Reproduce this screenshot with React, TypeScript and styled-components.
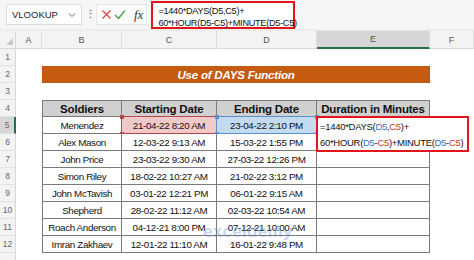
import { FC } from 'react';
import styled, { createGlobalStyle, css } from 'styled-components';

const GlobalStyle = createGlobalStyle`
  html, body {
    margin: 0;
    padding: 0;
    background: #ffffff;
  }
  body {
    width: 474px;
    height: 260px;
    overflow: hidden;
    font-family: 'Liberation Sans', Arial, sans-serif;
  }
`;

const BLUE = '#3b6fc4';
const RED = '#c0392b';
const GRID = '#7a7a7a';

const Page = styled.div`
  position: relative;
  width: 474px;
  height: 260px;
  overflow: hidden;
  background: #ffffff;
`;

const FormulaBar = styled.div`
  display: flex;
  align-items: center;
  gap: 3px;
  height: 31px;
  padding: 0 0 0 6px;
  background: #f6f6f6;
  border-bottom: 2px solid #ececec;
  box-sizing: border-box;
`;

const NameBox = styled.div`
  display: flex;
  align-items: center;
  justify-content: space-between;
  width: 76px;
  height: 21px;
  padding: 0 5px;
  box-sizing: border-box;
  background: #ffffff;
  border: 1px solid #dcdcdc;
  font-size: 9.5px;
  color: #222;
`;

const Dots = styled.span`
  width: 8px;
  text-align: center;
  color: #888;
  font-size: 11px;
  font-weight: bold;
`;

const FxGroup = styled.div`
  display: flex;
  align-items: center;
  gap: 2px;
  height: 21px;
  padding: 0 3px 0 4px;
  border: 1px solid #e6e6e6;
  background: #fbfbfb;
  box-sizing: border-box;
`;

const Fx = styled.span`
  font-family: 'Liberation Serif', 'Times New Roman', serif;
  font-style: italic;
  font-size: 13px;
  color: #333;
  padding-left: 6px;
`;

const FormulaBox = styled.div`
  width: 144px;
  height: 28px;
  margin-left: 1px;
  padding: 2px 0 0 5px;
  box-sizing: border-box;
  background: #ffffff;
  border: 2px solid #e4141b;
  font-size: 9.2px;
  letter-spacing: -0.3px;
  line-height: 12.5px;
  color: #111;
  white-space: nowrap;
`;

const Sheet = styled.div`
  display: grid;
  grid-template-columns: 16px 26px 80px 95px 100px 113px 1fr;
  grid-template-rows: 18px repeat(13, 17px);
`;

const Corner = styled.div`
  background: #f3f3f3;
  border-bottom: 1px solid #d8d8d8;
  border-right: 1px solid #d8d8d8;
  box-sizing: border-box;
  display: flex;
  align-items: flex-end;
  justify-content: flex-end;
  padding: 0 2px 3px 0;

  &::after {
    content: '';
    width: 0;
    height: 0;
    border-left: 7px solid transparent;
    border-bottom: 7px solid #c8c8c8;
  }
`;

const ColHead = styled.div<{ $active?: boolean }>`
  display: flex;
  align-items: center;
  justify-content: center;
  box-sizing: border-box;
  font-size: 9px;
  color: #555;
  background: ${({ $active }) => ($active ? '#d6d6d6' : '#f3f3f3')};
  border-right: 1px solid #dedede;
  border-bottom: ${({ $active }) => ($active ? '2px solid #217346' : '1px solid #d8d8d8')};
`;

const RowHead = styled.div<{ $active?: boolean }>`
  display: flex;
  align-items: center;
  justify-content: center;
  box-sizing: border-box;
  font-size: 8.5px;
  color: #666;
  background: ${({ $active }) => ($active ? '#d6d6d6' : '#f3f3f3')};
  border-bottom: 1px solid #e2e2e2;
  border-right: ${({ $active }) => ($active ? '2px solid #217346' : '1px solid #d8d8d8')};
`;

const Blank = styled.div<{ $span?: boolean }>`
  ${({ $span }) => $span && css`grid-column: 2 / 8;`}
`;

const TitleBar = styled.div`
  grid-column: 3 / 7;
  display: flex;
  align-items: center;
  justify-content: center;
  background: #c55a11;
  color: #ffffff;
  font-size: 11.5px;
  letter-spacing: -0.2px;
  font-weight: bold;
  font-style: italic;
`;

const Cell = styled.div<{ $head?: boolean; $first?: boolean; $fill?: string }>`
  position: relative;
  display: flex;
  align-items: center;
  justify-content: center;
  box-sizing: border-box;
  font-size: 9.8px;
  letter-spacing: -0.35px;
  color: #111;
  white-space: nowrap;
  border-right: 1px solid ${GRID};
  border-bottom: 1px solid ${GRID};
  background: ${({ $fill }) => $fill || '#ffffff'};
  ${({ $first }) => $first && css`border-left: 1.5px solid ${GRID};`}
  ${({ $head }) =>
    $head &&
    css`
      border-top: 1.5px solid ${GRID};
      background: #d0d0d0;
      font-size: 11.5px;
      letter-spacing: -0.2px;
      font-weight: bold;
    `}
`;

const RefFrame = styled.div<{ $color: string }>`
  position: absolute;
  inset: -1px;
  border: 1px solid ${({ $color }) => $color};
  pointer-events: none;
`;

const Handle = styled.span<{ $color: string; $x: 'left' | 'right'; $y: 'top' | 'bottom' }>`
  position: absolute;
  width: 4px;
  height: 4px;
  background: ${({ $color }) => $color};
  ${({ $x }) => $x}: -2.5px;
  ${({ $y }) => $y}: -2.5px;
`;

const EditBox = styled.div`
  position: absolute;
  top: -1px;
  left: -1px;
  z-index: 2;
  width: 153px;
  height: 36px;
  padding: 1px 0 0 2px;
  box-sizing: border-box;
  background: #ffffff;
  border: 2px solid #e4141b;
  font-size: 9.5px;
  letter-spacing: -0.3px;
  line-height: 16px;
  color: #111;
  text-align: left;
  white-space: nowrap;
`;

const Ref = styled.span<{ $color: string }>`
  color: ${({ $color }) => $color};
`;

const Watermark = styled.div`
  position: absolute;
  left: 203px;
  top: 223px;
  display: flex;
  flex-direction: column;
  align-items: flex-start;
  opacity: 0.3;
  color: #4a78c8;
  pointer-events: none;
`;

const WatermarkName = styled.span`
  font-size: 17px;
  font-weight: bold;
  line-height: 17px;
  letter-spacing: 0.3px;
`;

const WatermarkTag = styled.span`
  font-size: 5px;
  letter-spacing: 1px;
  padding-left: 26px;
`;

type Row = [string, string, string];

const rows: Row[] = [
  ['Menendez', '21-04-22 8:20 AM', '23-04-22 2:10 PM'],
  ['Alex Mason', '12-03-22 9:13 AM', '15-03-22 1:55 PM'],
  ['John Price', '23-03-22 9:30 AM', '27-03-22 12:26 PM'],
  ['Simon Riley', '18-02-22 10:27 AM', '21-02-22 3:12 PM'],
  ['John McTavish', '03-01-22 12:21 PM', '06-01-22 9:15 AM'],
  ['Shepherd', '28-02-22 11:12 AM', '02-03-22 10:54 AM'],
  ['Roach Anderson', '04-12-21 8:00 PM', '07-12-21 10:00 AM'],
  ['Imran Zakhaev', '12-01-22 11:10 AM', '16-01-22 9:48 PM'],
];

const columns = ['A', 'B', 'C', 'D', 'E', 'F'];

const Frame: FC<{ color: string }> = ({ color }) => (
  <RefFrame $color={color}>
    <Handle $color={color} $x="left" $y="top" />
    <Handle $color={color} $x="right" $y="top" />
    <Handle $color={color} $x="left" $y="bottom" />
    <Handle $color={color} $x="right" $y="bottom" />
  </RefFrame>
);

const Chevron = () => (
  <svg width="8" height="6" viewBox="0 0 8 6">
    <path d="M1 1.5 L4 4.5 L7 1.5" fill="none" stroke="#666" strokeWidth="1" />
  </svg>
);

const Cross = () => (
  <svg width="11" height="11" viewBox="0 0 11 11">
    <path d="M1.5 1.5 L9.5 9.5 M9.5 1.5 L1.5 9.5" stroke="#e0474c" strokeWidth="1.3" />
  </svg>
);

const Check = () => (
  <svg width="12" height="11" viewBox="0 0 12 11">
    <path d="M1 6 L4.5 9.5 L11 1.5" fill="none" stroke="#3f9a4a" strokeWidth="1.2" />
  </svg>
);

const App: FC = () => {
  return (
    <Page>
      <GlobalStyle />
      <FormulaBar>
        <NameBox>
          VLOOKUP
          <Chevron />
        </NameBox>
        <Dots>⋮</Dots>
        <FxGroup>
          <Cross />
          <Check />
          <Fx>fx</Fx>
        </FxGroup>
        <FormulaBox>
          =1440*DAYS(D5,C5)+
          <br />
          60*HOUR(D5-C5)+MINUTE(D5-C5)
        </FormulaBox>
      </FormulaBar>

      <Sheet>
        <Corner />
        {columns.map((c) => (
          <ColHead key={c} $active={c === 'E'}>
            {c}
          </ColHead>
        ))}

        <RowHead>1</RowHead>
        <Blank $span />

        <RowHead>2</RowHead>
        <Blank />
        <TitleBar>Use of DAYS Function</TitleBar>
        <Blank />

        <RowHead>3</RowHead>
        <Blank $span />

        <RowHead>4</RowHead>
        <Blank />
        <Cell $head $first>Soldiers</Cell>
        <Cell $head>Starting Date</Cell>
        <Cell $head>Ending Date</Cell>
        <Cell $head>Duration in Minutes</Cell>
        <Blank />

        {rows.map(([name, start, end], i) => {
          const isEditing = i === 0;
          return [
            <RowHead key={`h${i}`} $active={isEditing}>
              {i + 5}
            </RowHead>,
            <Blank key={`a${i}`} />,
            <Cell key={`b${i}`} $first>
              {name}
            </Cell>,
            <Cell key={`c${i}`} $fill={isEditing ? '#f2c9c9' : undefined}>
              {start}
              {isEditing && <Frame color="#b8464b" />}
            </Cell>,
            <Cell key={`d${i}`} $fill={isEditing ? '#c3dbf0' : undefined}>
              {end}
              {isEditing && <Frame color="#5b8fcf" />}
            </Cell>,
            <Cell key={`e${i}`}>
              {isEditing && (
                <EditBox>
                  =1440*DAYS(<Ref $color={BLUE}>D5</Ref>,<Ref $color={RED}>C5</Ref>)+
                  <br />
                  60*HOUR(<Ref $color={BLUE}>D5</Ref>-<Ref $color={RED}>C5</Ref>)+MINUTE(
                  <Ref $color={BLUE}>D5</Ref>-<Ref $color={RED}>C5</Ref>)
                </EditBox>
              )}
            </Cell>,
            <Blank key={`f${i}`} />,
          ];
        })}

        <RowHead />
        <Blank $span />
      </Sheet>

      <Watermark>
        <WatermarkName>exceldemy</WatermarkName>
        <WatermarkTag>EXCEL · DATA · BI</WatermarkTag>
      </Watermark>
    </Page>
  );
};

export default App;
